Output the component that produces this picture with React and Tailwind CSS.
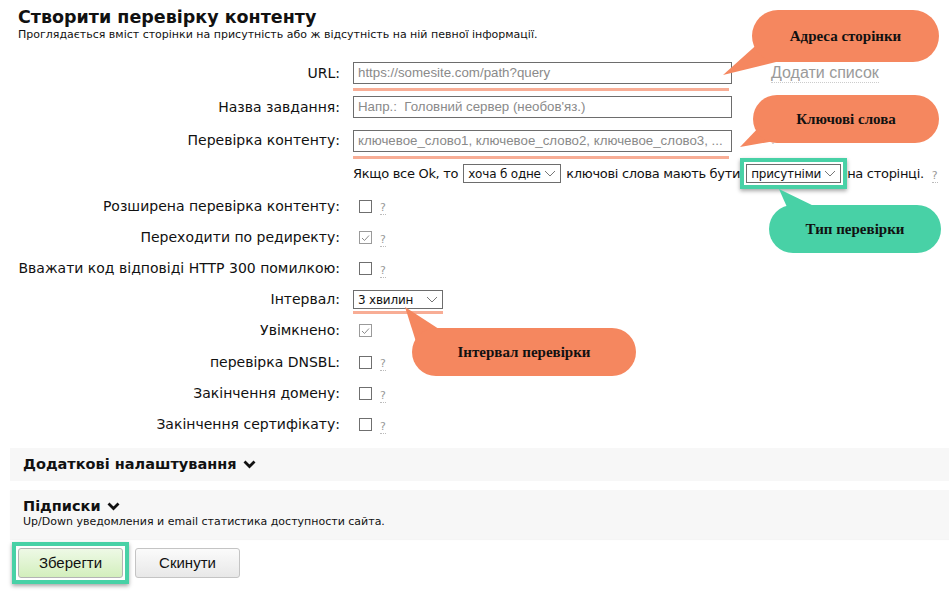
const LABEL = "font-['DejaVu_Sans',sans-serif] text-[14px] text-[#111] whitespace-nowrap";
const INLINE = "font-['DejaVu_Sans',sans-serif] text-[13px] tracking-[-0.3px] text-[#111] whitespace-nowrap";

function Help() {
  return (
    <span className="ml-[8px] shrink-0 text-[11px] leading-[13px] text-[#999] border-b border-dotted border-[#bbb] font-['DejaVu_Sans',sans-serif] pt-[4px]">
      ?
    </span>
  );
}

function Check({ checked }) {
  return (
    <span
      className={
        "inline-flex h-[13px] w-[13px] items-center justify-center border bg-white " +
        (checked ? "border-[#9a9a9a]" : "border-[#6f6f6f]")
      }
    >
      {checked && (
        <svg width="9" height="8" viewBox="0 0 9 8">
          <path d="M1 4 L3.5 6.5 L8 1.5" fill="none" stroke="#8a8a8a" strokeWidth="1" />
        </svg>
      )}
    </span>
  );
}

function Select({ value, w }) {
  return (
    <span
      className={
        "inline-flex h-[19px] shrink-0 items-center justify-between whitespace-nowrap border border-[#6d6d6d] bg-white pl-[4px] pr-[4px] font-['DejaVu_Sans',sans-serif] text-[12px] tracking-[-0.2px] text-[#111] " +
        w
      }
    >
      <span className="leading-none">{value}</span>
      <svg width="12" height="7" viewBox="0 0 12 7">
        <path d="M1 1 L6 6 L11 1" fill="none" stroke="#777" strokeWidth="1" />
      </svg>
    </span>
  );
}

function TextInput({ placeholder, line }) {
  return (
    <div className="relative shrink-0">
      <div className="flex h-[22px] w-[379px] items-center whitespace-pre border border-[#6d6d6d] bg-white px-[4px] font-['Liberation_Sans',sans-serif] text-[13.3px] text-[#8a8a8a]">
        {placeholder}
      </div>
      {line && <div className="absolute left-0 top-[26px] h-[3px] w-[376px] bg-[#f8ad95]" />}
    </div>
  );
}

function Row({ h, label, children }) {
  return (
    <div className={"flex items-center " + h}>
      <div className={"w-[340px] shrink-0 text-right " + LABEL}>{label}</div>
      <div className="ml-[13px] flex shrink-0 items-center">{children}</div>
    </div>
  );
}

function Chevron() {
  return (
    <svg width="13" height="9" viewBox="0 0 13 9" className="ml-[6px]">
      <path d="M1.5 1.5 L6.5 6.5 L11.5 1.5" fill="none" stroke="#111" strokeWidth="2.8" />
    </svg>
  );
}

function Bubble({ pos, color, text }) {
  return (
    <div
      className={
        "absolute flex items-center justify-center rounded-full font-['Liberation_Serif',serif] text-[15px] font-bold text-[#111] " +
        pos +
        " " +
        color
      }
    >
      {text}
    </div>
  );
}

export default function App() {
  return (
    <div className="relative h-[591px] w-[949px] overflow-hidden bg-white">
      <div className="pl-[18px] pt-[6px]">
        <h1 className="font-['DejaVu_Sans',sans-serif] text-[17.5px] font-bold leading-[22px] text-[#111]">
          Створити перевірку контенту
        </h1>
        <p className="font-['DejaVu_Sans',sans-serif] text-[11px] leading-[13px] text-[#111]">
          Проглядається вміст сторінки на присутність або ж відсутність на ній певної інформації.
        </p>
      </div>

      <div className="mt-[15px]">
        <Row h="h-[34px]" label="URL:">
          <TextInput placeholder="https://somesite.com/path?query" line />
          <span className="ml-[39px] whitespace-nowrap font-['Liberation_Sans',sans-serif] text-[16px] text-[#9a9a9a] border-b border-dotted border-[#ccc] leading-[19px]">
            Додати список
          </span>
        </Row>
        <Row h="h-[34px]" label="Назва завдання:">
          <TextInput placeholder="Напр.:  Головний сервер (необов'яз.)" />
        </Row>
        <Row h="h-[33px]" label="Перевірка контенту:">
          <TextInput placeholder="ключевое_слово1, ключевое_слово2, ключевое_слово3, ..." line />
          <span className="ml-[39px] text-[11px] text-[#bbb]">?</span>
        </Row>
        <Row h="h-[33px]" label="">
          <span className={INLINE}>Якщо все Ok, то</span>
          <span className="ml-[5px] flex">
            <Select value="хоча б одне" w="w-[98px]" />
          </span>
          <span className={"ml-[5px] " + INLINE}>ключові слова мають бути</span>
          <span className="relative ml-[6px] flex">
            <Select value="присутніми" w="w-[95px]" />
            <span className="absolute -inset-[6px] border-4 border-[#48d1a6] shadow-[0_2px_4px_rgba(0,0,0,0.35)]" />
          </span>
          <span className={"ml-[6px] " + INLINE}>на сторінці.</span>
          <Help />
        </Row>
        <Row h="h-[32px]" label="Розширена перевірка контенту:">
          <span className="ml-[6px] flex"><Check /></span>
          <Help />
        </Row>
        <Row h="h-[31px]" label="Переходити по редиректу:">
          <span className="ml-[6px] flex"><Check checked /></span>
          <Help />
        </Row>
        <Row h="h-[31px]" label="Вважати код відповіді HTTP 300 помилкою:">
          <span className="ml-[6px] flex"><Check /></span>
          <Help />
        </Row>
        <Row h="h-[31px]" label="Інтервал:">
          <div className="relative flex">
            <Select value="3 хвилин" w="w-[90px]" />
            <div className="absolute left-0 top-[21px] h-[3px] w-[90px] bg-[#f8ad95]" />
          </div>
        </Row>
        <Row h="h-[31px]" label="Увімкнено:">
          <span className="ml-[6px] flex"><Check checked /></span>
        </Row>
        <Row h="h-[32px]" label="перевірка DNSBL:">
          <span className="ml-[6px] flex"><Check /></span>
          <Help />
        </Row>
        <Row h="h-[31px]" label="Закінчення домену:">
          <span className="ml-[6px] flex"><Check /></span>
          <Help />
        </Row>
        <Row h="h-[31px]" label="Закінчення сертифікату:">
          <span className="ml-[6px] flex"><Check /></span>
          <Help />
        </Row>
      </div>

      <div className="ml-[10px] mt-[8px] flex h-[33px] items-center bg-[#f7f7f7] pl-[13px]">
        <span className="font-['DejaVu_Sans',sans-serif] text-[14.5px] font-bold text-[#111]">
          Додаткові налаштування
        </span>
        <Chevron />
      </div>
      <div className="ml-[10px] mt-[9px] h-[49px] bg-[#f7f7f7] pl-[13px] pt-[7px] shadow-[0_1px_1px_rgba(0,0,0,0.04)]">
        <div className="flex items-center">
          <span className="font-['DejaVu_Sans',sans-serif] text-[14.5px] font-bold leading-[18px] text-[#111]">
            Підписки
          </span>
          <Chevron />
        </div>
        <p className="font-['DejaVu_Sans',sans-serif] text-[11px] leading-[14px] text-[#111]">
          Up/Down уведомления и email статистика доступности сайта.
        </p>
      </div>

      <div className="ml-[18px] mt-[9px] flex gap-[12px]">
        <span className="relative flex">
          <button className="h-[30px] w-[105px] rounded-[3px] border border-[#b4b4b4] bg-gradient-to-b from-[#eef9e6] to-[#d3efbd] font-['Liberation_Sans',sans-serif] text-[15px] text-[#111]">
            Зберегти
          </button>
          <span className="absolute -inset-[6px] border-4 border-[#48d1a6] shadow-[0_2px_4px_rgba(0,0,0,0.35)]" />
        </span>
        <button className="h-[30px] w-[105px] rounded-[3px] border border-[#c4c4c4] bg-gradient-to-b from-[#fbfbfb] to-[#e8e8e8] font-['Liberation_Sans',sans-serif] text-[15px] text-[#111]">
          Скинути
        </button>
      </div>

      <svg className="pointer-events-none absolute left-0 top-0" width="949" height="591">
        <polygon points="762,40 723,75 792,58" fill="#f5875f" />
        <polygon points="762,124 740,147 792,138" fill="#f5875f" />
        <polygon points="779,189 790,214 818,208" fill="#48d1a6" />
        <polygon points="405,307 418,348 442,331" fill="#f5875f" />
      </svg>
      <Bubble pos="left-[752px] top-[10px] h-[52px] w-[187px]" color="bg-[#f5875f]" text="Адреса сторінки" />
      <Bubble pos="left-[753px] top-[95px] h-[48px] w-[186px]" color="bg-[#f5875f]" text="Ключові слова" />
      <Bubble pos="left-[769px] top-[205px] h-[48px] w-[172px]" color="bg-[#48d1a6]" text="Тип перевірки" />
      <Bubble pos="left-[412px] top-[328px] h-[48px] w-[224px]" color="bg-[#f5875f]" text="Інтервал перевірки" />
    </div>
  );
}
